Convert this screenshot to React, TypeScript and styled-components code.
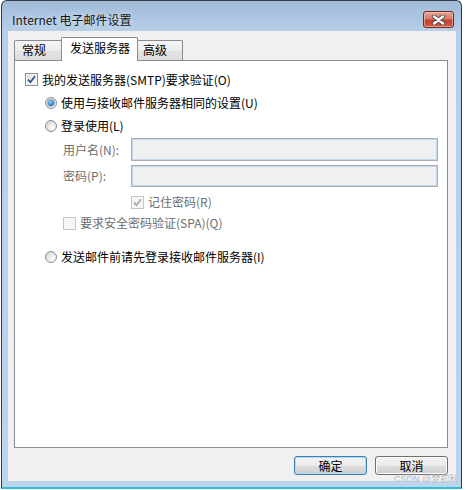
import React from "react";
import styled, { createGlobalStyle, css } from "styled-components";

const uiFont = `"Noto Sans CJK SC", "Noto Sans", sans-serif`;

const GlobalStyle = createGlobalStyle`
  html, body {
    margin: 0;
    padding: 0;
    background: #ffffff;
  }
  body {
    font-family: ${uiFont};
    font-size: 12px;
    color: #000000;
  }
`;

const Window = styled.div`
  position: relative;
  box-sizing: border-box;
  margin-left: 1px;
  width: 461px;
  height: 489px;
  display: flex;
  flex-direction: column;
  border: 1px solid #2e3a46;
  border-bottom: 2px solid #2cbfd6;
  border-radius: 6px 6px 0 0;
  background: linear-gradient(#a1bbd8 0px, #b6cee8 30px, #bcd4ec 100%);
`;

const TitleBar = styled.div`
  flex: none;
  height: 30px;
  display: flex;
  align-items: flex-start;
  justify-content: space-between;
`;

const Title = styled.div`
  margin: 11px 0 0 10px;
  font-size: 12px;
  line-height: 16px;
  color: #161616;
  text-shadow: 0 0 6px rgba(255, 255, 255, 0.8);
`;

const CloseButton = styled.div`
  margin: 10px 7px 0 0;
  box-sizing: border-box;
  width: 31px;
  height: 17px;
  display: flex;
  align-items: center;
  justify-content: center;
  border: 1px solid #6b2b22;
  border-radius: 3px;
  background: linear-gradient(#e7a595 0%, #d87a66 45%, #c4412b 55%, #cf5b40 100%);
  box-shadow: inset 0 0 0 1px rgba(255, 210, 200, 0.55);
`;

const Client = styled.div`
  flex: 1;
  margin: 0 5px 6px 6px;
  padding: 6px 8px 0 6px;
  display: flex;
  flex-direction: column;
  background: #f0f0f0;
`;

const TabRow = styled.div`
  position: relative;
  z-index: 1;
  height: 24px;
  margin-bottom: -1px;
  padding-left: 1px;
  display: flex;
  align-items: flex-end;
`;

const Tab = styled.div<{ $active?: boolean; $width: number; $pad: number }>`
  box-sizing: border-box;
  width: ${(p) => p.$width}px;
  padding-left: ${(p) => p.$pad}px;
  margin-left: -1px;
  border: 1px solid #898c95;
  border-bottom: none;
  border-radius: 2px 2px 0 0;
  line-height: 16px;
  white-space: nowrap;
  ${(p) =>
    p.$active
      ? css`
          position: relative;
          z-index: 2;
          height: 24px;
          padding-top: 2px;
          background: #ffffff;
        `
      : css`
          height: 20px;
          margin-bottom: 1px;
          padding-top: 1px;
          background: linear-gradient(#f4f4f4 0%, #ededed 50%, #e3e3e3 51%, #dcdcdc 100%);
        `}
`;

const Panel = styled.div`
  flex: none;
  box-sizing: border-box;
  height: 388px;
  border: 1px solid #898c95;
  background: #ffffff;
  padding: 7px 0 0 10px;
  display: flex;
  flex-direction: column;
`;

const Row = styled.div<{ $indent?: number; $height?: number; $top?: number }>`
  display: flex;
  align-items: center;
  gap: 4px;
  height: ${(p) => p.$height ?? 23}px;
  margin-top: ${(p) => p.$top ?? 0}px;
  padding-left: ${(p) => p.$indent ?? 0}px;
  line-height: 16px;
  white-space: nowrap;
`;

const Label = styled.span<{ $disabled?: boolean }>`
  color: ${(p) => (p.$disabled ? "#6d6d6d" : "#000000")};
`;

const FieldGrid = styled.div`
  margin-top: 1px;
  padding: 0 9px 0 38px;
  display: grid;
  grid-template-columns: 68px 1fr;
  grid-template-rows: 23px 22px;
  row-gap: 4px;
  align-items: center;
`;

const FieldLabel = styled.span`
  color: #6d6d6d;
  line-height: 16px;
`;

const TextBox = styled.div`
  box-sizing: border-box;
  height: 100%;
  border: 1px solid #a9adb4;
  box-shadow: inset 0 0 0 1px #c4d7ed;
  background: #f0f0f0;
`;

const Box = styled.span<{ $disabled?: boolean }>`
  box-sizing: border-box;
  flex: none;
  width: 13px;
  height: 13px;
  display: inline-flex;
  align-items: center;
  justify-content: center;
  border: 1px solid ${(p) => (p.$disabled ? "#c5c5c5" : "#8e8f8f")};
  background: ${(p) =>
    p.$disabled ? "#f4f4f4" : "linear-gradient(135deg, #dadada 0%, #f6f6f6 70%, #ffffff 100%)"};
  box-shadow: inset 0 0 0 1px ${(p) => (p.$disabled ? "#f7f7f7" : "#f2f2f2")};
`;

const Circle = styled.span`
  box-sizing: border-box;
  flex: none;
  width: 12px;
  height: 12px;
  border-radius: 50%;
  display: inline-flex;
  align-items: center;
  justify-content: center;
  border: 1px solid #8e8f8f;
  background: radial-gradient(circle at 65% 70%, #ffffff 0%, #e6e6e6 50%, #cfcfcf 100%);
`;

const Dot = styled.span`
  width: 6px;
  height: 6px;
  border-radius: 50%;
  background: radial-gradient(circle at 40% 35%, #a6dcfa 0%, #3f8fd6 45%, #1b4f90 100%);
  box-shadow: 0 0 0 1px rgba(40, 80, 140, 0.35);
`;

const ButtonRow = styled.div`
  margin-top: 8px;
  display: flex;
  justify-content: flex-end;
  gap: 8px;
`;

const Button = styled.div<{ $default?: boolean }>`
  box-sizing: border-box;
  width: 73px;
  height: 19px;
  display: flex;
  align-items: center;
  justify-content: center;
  border-radius: 3px;
  line-height: 16px;
  border: 1px solid ${(p) => (p.$default ? "#3c7fb1" : "#707070")};
  background: linear-gradient(#f2f2f2 0%, #ebebeb 50%, #dddddd 51%, #cfcfcf 100%);
  box-shadow: inset 0 0 0 1px ${(p) => (p.$default ? "#a9dcf5" : "#fbfbfb")};
`;

const Watermark = styled.div`
  position: absolute;
  left: 392px;
  top: 472px;
  font-family: "Liberation Sans", ${uiFont};
  font-size: 9px;
  line-height: 12px;
  color: rgba(160, 165, 172, 0.8);
  white-space: nowrap;
  text-shadow: 0 0 2px rgba(255, 255, 255, 0.9);
  pointer-events: none;
`;

function CheckBox({ checked, disabled }: { checked?: boolean; disabled?: boolean }) {
  return (
    <Box $disabled={disabled}>
      {checked && (
        <svg width="9" height="9" viewBox="0 0 9 9">
          <path
            d="M1 4.6 L3.4 7.2 L8 1.2"
            fill="none"
            stroke={disabled ? "#a8a8a8" : "#2e4a88"}
            strokeWidth="1.7"
          />
        </svg>
      )}
    </Box>
  );
}

function Radio({ checked }: { checked?: boolean }) {
  return <Circle>{checked && <Dot />}</Circle>;
}

function CloseGlyph() {
  return (
    <svg width="15" height="10" viewBox="0 0 15 10">
      <path d="M3 1.5 L12 8.5 M12 1.5 L3 8.5" stroke="#4b4b4b" strokeWidth="4.2" strokeLinecap="round" />
      <path d="M3 1.5 L12 8.5 M12 1.5 L3 8.5" stroke="#ffffff" strokeWidth="2.4" strokeLinecap="round" />
    </svg>
  );
}

export default function App() {
  return (
    <>
      <GlobalStyle />
      <Window>
        <TitleBar>
          <Title>Internet 电子邮件设置</Title>
          <CloseButton>
            <CloseGlyph />
          </CloseButton>
        </TitleBar>
        <Client>
          <TabRow>
            <Tab $width={48} $pad={7}>常规</Tab>
            <Tab $active $width={77} $pad={8}>发送服务器</Tab>
            <Tab $width={46} $pad={5}>高级</Tab>
          </TabRow>
          <Panel>
            <Row>
              <CheckBox checked />
              <Label>我的发送服务器(SMTP)要求验证(O)</Label>
            </Row>
            <Row $indent={20}>
              <Radio checked />
              <Label>使用与接收邮件服务器相同的设置(U)</Label>
            </Row>
            <Row $indent={20}>
              <Radio />
              <Label>登录使用(L)</Label>
            </Row>
            <FieldGrid>
              <FieldLabel>用户名(N):</FieldLabel>
              <TextBox />
              <FieldLabel>密码(P):</FieldLabel>
              <TextBox />
            </FieldGrid>
            <Row $indent={106} $height={20} $top={5}>
              <CheckBox checked disabled />
              <Label $disabled>记住密码(R)</Label>
            </Row>
            <Row $indent={38} $height={20} $top={1}>
              <CheckBox disabled />
              <Label $disabled>要求安全密码验证(SPA)(Q)</Label>
            </Row>
            <Row $indent={20} $height={20} $top={14}>
              <Radio />
              <Label>发送邮件前请先登录接收邮件服务器(I)</Label>
            </Row>
          </Panel>
          <ButtonRow>
            <Button $default>确定</Button>
            <Button>取消</Button>
          </ButtonRow>
        </Client>
        <Watermark>CSDN @梦初秋</Watermark>
      </Window>
    </>
  );
}
